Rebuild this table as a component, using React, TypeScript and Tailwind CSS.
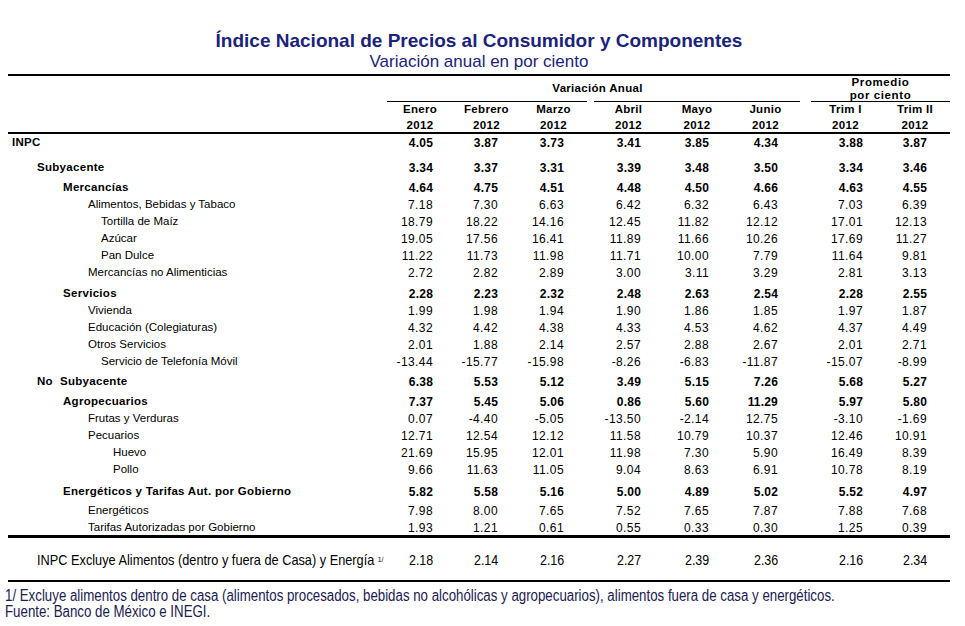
const GRID =
  "grid grid-cols-[379px_66px_67px_67px_7px_69px_68px_69px_11px_69px_70px]";

const PR = [
  "pr-[20px]",
  "pr-[22px]",
  "pr-[23px]",
  "pr-[22px]",
  "pr-[22px]",
  "pr-[22px]",
  "pr-[17px]",
  "pr-[23px]",
];

const MONTHS = ["Enero", "Febrero", "Marzo", "Abril", "Mayo", "Junio", "Trim I", "Trim II"];

type Row = {
  label: string;
  indent: string;
  bold?: boolean;
  mt?: string;
  h?: string;
  vals: string[];
};

const ROWS: Row[] = [
  { label: "INPC", indent: "pl-[4px]", bold: true, vals: ["4.05", "3.87", "3.73", "3.41", "3.85", "4.34", "3.88", "3.87"] },
  { label: "Subyacente", indent: "pl-[29px]", bold: true, mt: "mt-[8px]", vals: ["3.34", "3.37", "3.31", "3.39", "3.48", "3.50", "3.34", "3.46"] },
  { label: "Mercancías", indent: "pl-[55px]", bold: true, mt: "mt-[3px]", vals: ["4.64", "4.75", "4.51", "4.48", "4.50", "4.66", "4.63", "4.55"] },
  { label: "Alimentos, Bebidas y Tabaco", indent: "pl-[80px]", vals: ["7.18", "7.30", "6.63", "6.42", "6.32", "6.43", "7.03", "6.39"] },
  { label: "Tortilla de Maíz", indent: "pl-[93px]", vals: ["18.79", "18.22", "14.16", "12.45", "11.82", "12.12", "17.01", "12.13"] },
  { label: "Azúcar", indent: "pl-[93px]", vals: ["19.05", "17.56", "16.41", "11.89", "11.66", "10.26", "17.69", "11.27"] },
  { label: "Pan Dulce", indent: "pl-[93px]", vals: ["11.22", "11.73", "11.98", "11.71", "10.00", "7.79", "11.64", "9.81"] },
  { label: "Mercancías no Alimenticias", indent: "pl-[80px]", vals: ["2.72", "2.82", "2.89", "3.00", "3.11", "3.29", "2.81", "3.13"] },
  { label: "Servicios", indent: "pl-[55px]", bold: true, mt: "mt-[4px]", vals: ["2.28", "2.23", "2.32", "2.48", "2.63", "2.54", "2.28", "2.55"] },
  { label: "Vivienda", indent: "pl-[80px]", vals: ["1.99", "1.98", "1.94", "1.90", "1.86", "1.85", "1.97", "1.87"] },
  { label: "Educación (Colegiaturas)", indent: "pl-[80px]", vals: ["4.32", "4.42", "4.38", "4.33", "4.53", "4.62", "4.37", "4.49"] },
  { label: "Otros Servicios", indent: "pl-[80px]", vals: ["2.01", "1.88", "2.14", "2.57", "2.88", "2.67", "2.01", "2.71"] },
  { label: "Servicio de Telefonía Móvil", indent: "pl-[93px]", vals: ["-13.44", "-15.77", "-15.98", "-8.26", "-6.83", "-11.87", "-15.07", "-8.99"] },
  { label: "No\u00a0\u00a0Subyacente", indent: "pl-[29px]", bold: true, mt: "mt-[3px]", vals: ["6.38", "5.53", "5.12", "3.49", "5.15", "7.26", "5.68", "5.27"] },
  { label: "Agropecuarios", indent: "pl-[55px]", bold: true, mt: "mt-[3px]", vals: ["7.37", "5.45", "5.06", "0.86", "5.60", "11.29", "5.97", "5.80"] },
  { label: "Frutas y Verduras", indent: "pl-[80px]", vals: ["0.07", "-4.40", "-5.05", "-13.50", "-2.14", "12.75", "-3.10", "-1.69"] },
  { label: "Pecuarios", indent: "pl-[80px]", vals: ["12.71", "12.54", "12.12", "11.58", "10.79", "10.37", "12.46", "10.91"] },
  { label: "Huevo", indent: "pl-[105px]", vals: ["21.69", "15.95", "12.01", "11.98", "7.30", "5.90", "16.49", "8.39"] },
  { label: "Pollo", indent: "pl-[105px]", vals: ["9.66", "11.63", "11.05", "9.04", "8.63", "6.91", "10.78", "8.19"] },
  { label: "Energéticos y Tarifas Aut. por Gobierno", indent: "pl-[55px]", bold: true, mt: "mt-[5px]", vals: ["5.82", "5.58", "5.16", "5.00", "4.89", "5.02", "5.52", "4.97"] },
  { label: "Energéticos", indent: "pl-[80px]", mt: "mt-[2px]", vals: ["7.98", "8.00", "7.65", "7.52", "7.65", "7.87", "7.88", "7.68"] },
  { label: "Tarifas Autorizadas por Gobierno", indent: "pl-[80px]", h: "h-[16px]", vals: ["1.93", "1.21", "0.61", "0.55", "0.33", "0.30", "1.25", "0.39"] },
];

const EXCLUYE = ["2.18", "2.14", "2.16", "2.27", "2.39", "2.36", "2.16", "2.34"];

function Values({ vals, className, narrow }: { vals: string[]; className: string; narrow?: boolean }) {
  const cell = (i: number) => (
    <div key={i} className={`text-right ${PR[i]} ${className}`}>
      {narrow ? <span className="inline-block origin-right scale-x-[0.83]">{vals[i]}</span> : vals[i]}
    </div>
  );
  return (
    <>
      {[0, 1, 2].map(cell)}
      <div />
      {[3, 4, 5].map(cell)}
      <div />
      {[6, 7].map(cell)}
    </>
  );
}

function DataRow({ row }: { row: Row }) {
  return (
    <div className={`${GRID} items-center ${row.h ?? "h-[17px]"} ${row.mt ?? ""}`}>
      <div
        className={`${row.indent} whitespace-pre ${
          row.bold ? "font-bold text-[11.5px] tracking-[0.3px]" : "text-[11.5px]"
        }`}
      >
        {row.label}
      </div>
      <Values
        vals={row.vals}
        className={row.bold ? "font-bold text-[12px] tracking-[0.2px]" : "text-[12px] tracking-[0.4px]"}
      />
    </div>
  );
}

export default function App() {
  return (
    <div className="w-[965px] h-[626px] bg-white text-black pt-[30px] font-['Liberation_Sans',Arial,sans-serif] overflow-hidden">
      <div className="ml-[8px] w-[942px]">
        {/* Títulos */}
        <h1 className="text-center text-[19px] leading-[22px] font-bold text-[#1b237a]">
          Índice Nacional de Precios al Consumidor y Componentes
        </h1>
        <h2 className="text-center text-[17px] leading-[20px] text-[#1b237a]">
          Variación anual en por ciento
        </h2>

        <div className="mt-[2px] h-[2px] bg-black" />

        {/* Encabezado */}
        <div className={`${GRID} h-[25px] text-[11.5px] font-bold tracking-[0.3px]`}>
          <div />
          <div className="col-span-7 text-center pt-[5px] leading-[14px] pl-[8px]">Variación Anual</div>
          <div />
          <div className="col-span-2 text-center leading-[12.5px] tracking-[0.6px]">
            Promedio
            <br />
            por ciento
          </div>
        </div>
        <div className={`${GRID} h-[1px]`}>
          <div />
          <div className="col-span-3 bg-black" />
          <div />
          <div className="col-span-3 bg-black" />
          <div />
          <div className="col-span-2 bg-black" />
        </div>
        <div className={`${GRID} h-[30px] text-[11.5px] font-bold tracking-[0.3px]`}>
          <div />
          {MONTHS.map((m, i) => (
            <>
              <div key={m} className="flex flex-col items-center leading-[14px] gap-[2px]">
                <span>{m}</span>
                <span>2012</span>
              </div>
              {(i === 2 || i === 5) && <div key={`s${i}`} />}
            </>
          ))}
        </div>
        <div className="h-[2px] bg-black" />

        {/* Cuerpo */}
        {ROWS.map((r) => (
          <DataRow key={r.label} row={r} />
        ))}

        <div className="h-[3px] bg-black" />

        <div className={`${GRID} items-center h-[17px] mt-[10px]`}>
          <div className="pl-[29px] whitespace-nowrap">
            <span className="inline-block origin-left scale-x-[0.85] text-[15px]">
              INPC Excluye Alimentos (dentro y fuera de Casa) y Energía
              <sup className="text-[8px] ml-[4px] relative -top-[3px]">1/</sup>
            </span>
          </div>
          <Values vals={EXCLUYE} className="text-[15px]" narrow />
        </div>

        <div className="mt-[15px] h-[2px] bg-black" />
      </div>

      {/* Notas */}
      <div className="mt-[6px] pl-[5px] text-[16px] leading-[16px] text-[#1a2050]">
        <p className="origin-left scale-x-[0.83] whitespace-nowrap">
          1/ Excluye alimentos dentro de casa (alimentos procesados, bebidas no alcohólicas y agropecuarios),
          alimentos fuera de casa y energéticos.
        </p>
        <p className="origin-left scale-x-[0.83] whitespace-nowrap">Fuente: Banco de México e INEGI.</p>
      </div>
    </div>
  );
}
